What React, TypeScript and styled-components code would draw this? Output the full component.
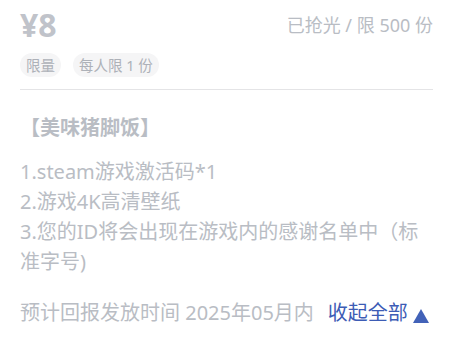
import React from 'react'
import styled, { createGlobalStyle } from 'styled-components'

const GlobalStyle = createGlobalStyle`
  body {
    margin: 0;
    background: #fff;
    font-family: 'Noto Sans', 'Noto Sans CJK SC', sans-serif;
  }
`

const tags = ['限量', '每人限 1 份']
const rewards = ['1.steam游戏激活码*1', '2.游戏4K高清壁纸', '3.您的ID将会出现在游戏内的感谢名单中（标准字号)']

const App: React.FC = () => {
  return (
    <>
      <GlobalStyle />
      <Card>
        <Header>
          <Price>¥8</Price>
          <Stock>已抢光 / 限 500 份</Stock>
        </Header>
        <Tags>
          {tags.map((t) => (
            <Tag key={t}>{t}</Tag>
          ))}
        </Tags>
        <Divider />
        <Title>【美味猪脚饭】</Title>
        <List>
          {rewards.map((r) => (
            <Item key={r}>{r}</Item>
          ))}
        </List>
        <Footer>
          <span>预计回报发放时间 2025年05月内</span>
          <Toggle>
            收起全部
            <Arrow />
          </Toggle>
        </Footer>
      </Card>
    </>
  )
}

export default App

const Card = styled.div`
  padding: 6px 21px 0 20px;
  color: #b9bdc4;
`
const Header = styled.div`
  display: flex;
  justify-content: space-between;
  align-items: center;
  height: 38px;
`
const Price = styled.div`
  font-size: 32px;
  font-weight: 700;
  line-height: 38px;
  color: #c0c3ca;
`
const Stock = styled.div`
  font-size: 18px;
  line-height: 38px;
`
const Tags = styled.div`
  display: flex;
  gap: 12px;
  margin-top: 9px;
`
const Tag = styled.span`
  height: 24px;
  line-height: 24px;
  padding: 0 6px;
  border-radius: 12px;
  background: #f5f5f6;
  font-size: 14.5px;
  color: #adb1b8;
`
const Divider = styled.div`
  margin-top: 12px;
  height: 1px;
  background: #e4e4e6;
`
const Title = styled.div`
  margin-top: 24px;
  font-size: 20px;
  font-weight: 700;
  line-height: 28px;
`
const List = styled.div`
  margin-top: 15px;
  font-size: 20px;
  line-height: 30px;
`
const Item = styled.div``
const Footer = styled.div`
  display: flex;
  align-items: center;
  margin-top: 21px;
  font-size: 20px;
  line-height: 30px;
`
const Toggle = styled.span`
  display: flex;
  align-items: center;
  gap: 5px;
  margin-left: 14px;
  color: #3d5cb5;
`
const Arrow = styled.span`
  width: 0;
  height: 0;
  margin-top: 6px;
  border-left: 8px solid transparent;
  border-right: 8px solid transparent;
  border-bottom: 14px solid #4262b8;
`
